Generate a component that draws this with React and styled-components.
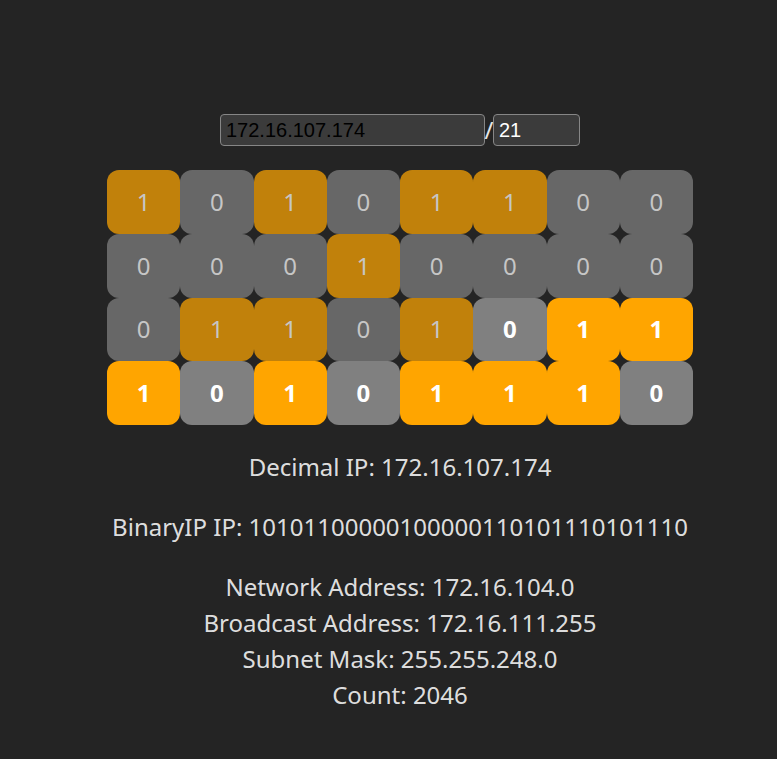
import React from 'react';
import styled, { createGlobalStyle } from 'styled-components';

const GlobalStyle = createGlobalStyle`
  html, body {
    margin: 0;
    background: #242424;
  }
  body {
    font-family: 'Noto Sans', 'Open Sans', sans-serif;
    color: rgba(255, 255, 255, 0.87);
  }
`;

const toBits = (ip) =>
  ip
    .split('.')
    .map((part) => (parseInt(part, 10) || 0).toString(2).padStart(8, '0').slice(-8))
    .join('')
    .padEnd(32, '0')
    .slice(0, 32);

const bitsToIp = (bits) =>
  [0, 8, 16, 24].map((i) => parseInt(bits.slice(i, i + 8), 2)).join('.');

const App = () => {
  const [ip, setIp] = React.useState('172.16.107.174');
  const [prefix, setPrefix] = React.useState('21');

  const bits = toBits(ip);
  const size = Math.min(32, Math.max(0, parseInt(prefix, 10) || 0));
  const network = bits.slice(0, size).padEnd(32, '0');
  const broadcast = bits.slice(0, size).padEnd(32, '1');
  const mask = ''.padStart(size, '1').padEnd(32, '0');
  const count = Math.max(0, 2 ** (32 - size) - 2);

  return (
    <Wrapper>
      <GlobalStyle />
      <InputRow>
        <IpInput value={ip} onChange={(e) => setIp(e.target.value)} />
        <Slash>/</Slash>
        <PrefixInput value={prefix} onChange={(e) => setPrefix(e.target.value)} />
      </InputRow>
      <BitGrid>
        {bits.split('').map((bit, idx) => (
          <Bit key={idx} $on={bit === '1'} $network={idx < size}>
            {bit}
          </Bit>
        ))}
      </BitGrid>
      <Line>Decimal IP: {bitsToIp(bits)}</Line>
      <Line>BinaryIP IP: {bits}</Line>
      <Info>
        <div>Network Address: {bitsToIp(network)}</div>
        <div>Broadcast Address: {bitsToIp(broadcast)}</div>
        <div>Subnet Mask: {bitsToIp(mask)}</div>
        <div>Count: {count}</div>
      </Info>
    </Wrapper>
  );
};

const Wrapper = styled.div`
  display: flex;
  flex-direction: column;
  align-items: center;
  box-sizing: border-box;
  padding: 114px 0 0 23px;
  font-size: 24px;
  line-height: 36px;
`;

const InputRow = styled.div`
  display: flex;
  align-items: center;
  height: 32px;
  margin-bottom: 24px;
`;

const BaseInput = styled.input`
  box-sizing: border-box;
  height: 32px;
  padding: 0 5px;
  border: 1px solid #868686;
  border-radius: 4px;
  background: #3b3b3b;
  font-family: 'Liberation Sans', Arial, sans-serif;
  font-size: 20px;
  outline: none;
`;

const IpInput = styled(BaseInput)`
  width: 265px;
  color: #000;
`;

const PrefixInput = styled(BaseInput)`
  width: 87px;
  color: #fff;
`;

const Slash = styled.span`
  width: 8px;
  display: flex;
  justify-content: center;
  font-size: 24px;
  line-height: 32px;
  color: #e6e6e6;
`;

const BitGrid = styled.div`
  display: grid;
  grid-template-columns: repeat(8, 1fr);
  grid-auto-rows: 63.75px;
  width: 586px;
  margin-bottom: 24px;
`;

const Bit = styled.div`
  display: flex;
  align-items: center;
  justify-content: center;
  border-radius: 12px;
  background: ${({ $on, $network }) =>
    $network ? ($on ? '#c1810b' : '#676767') : $on ? '#ffa500' : '#808080'};
  color: ${({ $network }) => ($network ? '#c6c6c6' : '#fff')};
  font-weight: ${({ $network }) => ($network ? 400 : 700)};
`;

const Line = styled.div`
  margin-bottom: 24px;
  white-space: nowrap;
`;

const Info = styled.div`
  display: flex;
  flex-direction: column;
  align-items: center;
  white-space: nowrap;
`;

export default App;
